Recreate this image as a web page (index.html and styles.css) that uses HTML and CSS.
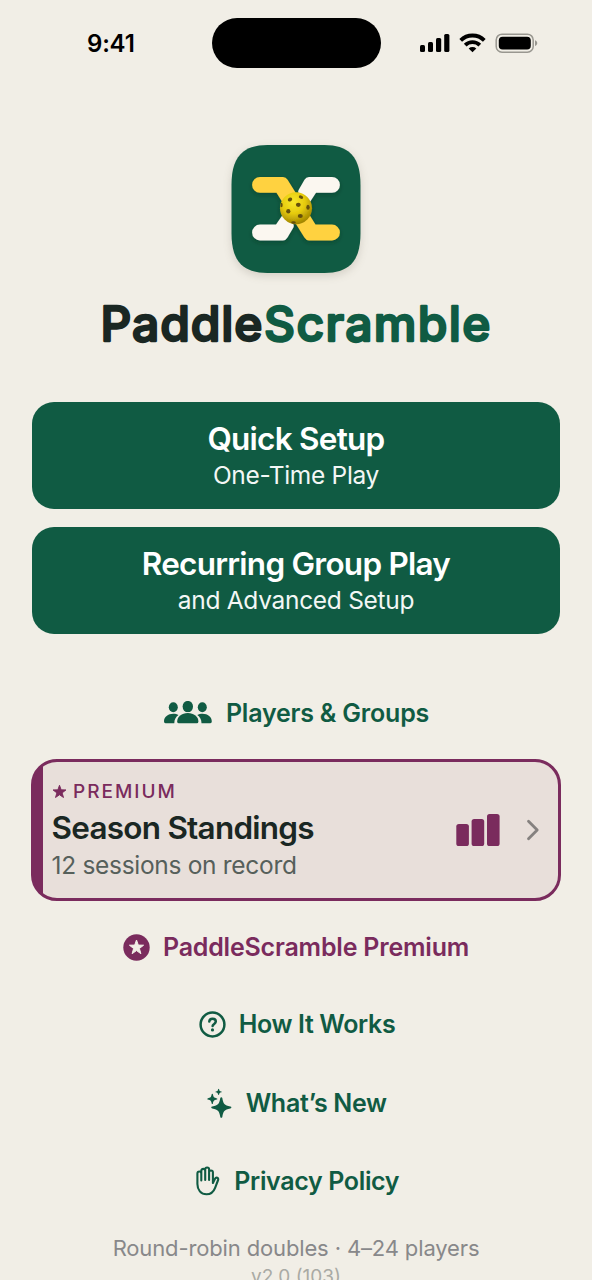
FILE: index.html
```html
<!DOCTYPE html>
<html lang="en">
<head>
<meta charset="utf-8">
<title>PaddleScramble</title>
<link rel="stylesheet" href="styles.css">
</head>
<body>
<div class="screen">
  <header class="status">
    <span class="time">9:41</span>
    <span class="island"></span>
    <svg class="indicators" width="118" height="20" viewBox="0 0 118 20">
      <rect x="0" y="12" width="5" height="7" rx="1.500"/>
      <rect x="8" y="9" width="5" height="10" rx="1.500"/>
      <rect x="16" y="5" width="5.200" height="14" rx="1.500"/>
      <rect x="24.200" y="1" width="5.200" height="18" rx="1.500"/>
      <g fill="none" stroke="#000" stroke-width="3.800">
        <path d="M40.700 7.400a16.600 16.600 0 0 1 23.600 0"/>
        <path d="M45.200 12.100a10.400 10.400 0 0 1 14.600 0"/>
      </g>
      <path d="M48.700 15.500a5.600 5.600 0 0 1 7.600 0L52.500 19.300Z"/>
      <rect x="76.200" y="1.200" width="37" height="18" rx="5.800" fill="none" stroke="#999790" stroke-width="1.500"/>
      <rect x="78.800" y="3.800" width="32" height="12.800" rx="3.800"/>
      <path d="M115 7.200c3 1 3 4.800 0 5.800Z" fill="#999790"/>
    </svg>
  </header>

  <svg class="app-icon" width="130" height="128" viewBox="-1 0 130 128">
    <defs>
      <radialGradient id="ball" cx=".42" cy=".3" r=".72">
        <stop offset="0" stop-color="#f8e72a"/><stop offset=".5" stop-color="#e6cb0e"/><stop offset="1" stop-color="#9d8100"/>
      </radialGradient>
      <filter id="soft" x="-20%" y="-20%" width="140%" height="150%"><feDropShadow dx="0" dy="2" stdDeviation="2" flood-color="#05281a" flood-opacity=".35"/></filter>
      <clipPath id="round"><circle cx="64" cy="63.300" r="16"/></clipPath>
    </defs>
    <path fill="#105b43" d="M40 0H88C101 0 109 1 116.500 6.500C125 13 128.500 24 128.500 40V88C128.500 104 125 115 116.500 121.500C109 127 101 128 88 128H40C27 128 19 127 11.500 121.500C3 115-.5 104-.5 88V40C-.5 24 3 13 11.500 6.500C19 1 27 0 40 0Z"/>
    <g filter="url(#soft)">
      <path fill="#fbf7f0" d="M77 32H100a7.900 7.900 0 0 1 0 15.800H84L76 60H72L66.500 48Q65.800 46.500 66.600 45L72.500 34.800Q74 32 77 32Z"/>
      <path fill="#fbf7f0" d="M51 95.400H28a7.900 7.900 0 0 1 0-15.800H44L52 68H56L61.500 79.500Q62.200 81 61.400 82.500L55.500 92.600Q54 95.400 51 95.400Z"/>
      <path fill="#ffd23f" d="M28 32H51Q54 32 55.600 34.800L83.500 79.600H100a7.900 7.900 0 0 1 0 15.800H77Q74 95.400 72.400 92.600L44.500 47.800H28a7.900 7.900 0 0 1 0-15.800Z"/>
      <circle cx="64" cy="63.300" r="16" fill="url(#ball)"/>
    </g>
    <g clip-path="url(#round)" fill="#65500c">
      <ellipse cx="58" cy="54.500" rx="2.300" ry="1.800" transform="rotate(-25 58 54.500)"/>
      <ellipse cx="69" cy="52.100" rx="2.300" ry="1.600" transform="rotate(25 69 52.100)"/>
      <ellipse cx="66.300" cy="59.800" rx="2.400" ry="2.100"/>
      <ellipse cx="76" cy="62.300" rx="1.700" ry="2.500"/>
      <ellipse cx="56.300" cy="66.300" rx="2.100" ry="2.200"/>
      <ellipse cx="68.300" cy="71" rx="2.500" ry="2"/>
      <ellipse cx="49.500" cy="60" rx="1.200" ry="2.300"/>
      <ellipse cx="61.500" cy="77.500" rx="2.300" ry="1.300"/>
    </g>
  </svg>

  <svg class="wordmark" width="400" height="60" viewBox="0 0 400 60" role="heading">
    <text class="word-dark" x="4.500" y="46.500" textLength="162" lengthAdjust="spacing">Paddle</text>
    <text class="word-green" x="168" y="46.500" textLength="226.500" lengthAdjust="spacing">Scramble</text>
  </svg>

  <main class="content">
    <button class="action">
      <span class="action-title">Quick Setup</span>
      <span class="action-sub">One-Time Play</span>
    </button>
    <button class="action">
      <span class="action-title">Recurring Group Play</span>
      <span class="action-sub">and Advanced Setup</span>
    </button>

    <a class="link players">
      <svg width="48" height="24" viewBox="0 0 48 24" fill="currentColor">
        <ellipse cx="9.300" cy="6.300" rx="4.500" ry="5"/><ellipse cx="38.300" cy="6.300" rx="4.500" ry="5"/>
        <path d="M0 20.500C0 16 4 12.800 9.300 12.800c2 0 3.700.4 5.200 1.300-2.600 1.800-4.200 4.500-4.200 8.100H1.500Q0 22.200 0 20.500Z"/>
        <path d="M47.800 20.500c0-4.500-4-7.700-9.300-7.700-2 0-3.700.4-5.200 1.300 2.600 1.800 4.200 4.500 4.200 8.100h8.800q1.500 0 1.500-1.700Z"/>
        <g stroke="#f1eee6" stroke-width="1.600" paint-order="stroke"><ellipse cx="23.800" cy="5.600" rx="5.200" ry="5.700"/>
        <path d="M13.200 20.400c0-4.800 4.500-8.400 10.600-8.400s10.600 3.600 10.600 8.400q0 1.900-1.700 1.900H14.900q-1.700 0-1.700-1.900Z"/></g>
      </svg>
      <span>Players &amp; Groups</span>
    </a>

    <section class="card">
      <div class="card-text">
        <div class="eyebrow">
          <svg width="15" height="15" viewBox="0 0 24 24" fill="currentColor"><path stroke="currentColor" stroke-width="1.500" stroke-linejoin="round" d="M12 2l2.600 7.300 7.700.2-6.100 4.700 2.200 7.400L12 17.200l-6.400 4.400 2.200-7.400L1.700 9.500l7.700-.2Z"/></svg>
          <span>PREMIUM</span>
        </div>
        <div class="card-title">Season Standings</div>
        <div class="card-sub">12 sessions on record</div>
      </div>
      <svg class="bars" width="44" height="34" viewBox="0 0 44 34" fill="currentColor">
        <rect x=".3" y="11" width="12.600" height="22" rx="2.600"/><rect x="15.600" y="6" width="12.600" height="27" rx="2.600"/><rect x="31" y="1" width="12.600" height="32" rx="2.600"/>
      </svg>
      <svg class="chevron" width="14" height="22" viewBox="0 0 14 22"><path d="M2.500 2.200 11.200 11l-8.700 8.800"/></svg>
    </section>

    <a class="link premium">
      <svg width="27" height="27" viewBox="0 0 27 27"><circle cx="13.500" cy="13.500" r="13.200" fill="currentColor"/><path fill="#f1eee6" stroke="#f1eee6" stroke-linejoin="round" d="M13.500 6l1.800 5.100 5.300.1-4.200 3.300 1.500 5.200-4.400-3.100-4.400 3.100 1.500-5.200-4.200-3.300 5.300-.1Z"/></svg>
      <span>PaddleScramble Premium</span>
    </a>
    <a class="link how">
      <svg width="27" height="27" viewBox="0 0 27 27" fill="none" stroke="currentColor" stroke-linecap="round" stroke-linejoin="round"><circle cx="13.500" cy="13.500" r="11.900" stroke-width="2.500"/><path stroke-width="2.500" d="M10.300 10.500c.2-3.700 6.500-3.600 6.500.1 0 2.300-3.200 2.300-3.200 4.500"/><circle cx="13.500" cy="18.900" r="1.600" fill="currentColor" stroke="none"/></svg>
      <span>How It Works</span>
    </a>
    <a class="link new">
      <svg width="25" height="30" viewBox="0 0 25 30" fill="currentColor">
        <path d="M14.300 9.200q.8 0 1 .9c1 5.700 2 7.300 8 8.500q1.100.2 1.100.9t-1.100.9c-6 1.200-7 2.800-8 8.500q-.2.900-1 .9t-1-.9c-1-5.700-2-7.300-8-8.500q-1.100-.2-1.100-.9t1.100-.9c6-1.200 7-2.800 8-8.500q.2-.9 1-.9Z"/>
        <path d="M5.300 5.800q.5 0 .6.500c.6 2.900 1 3.400 4 4.100q.5.100.5.500t-.5.500c-3 .7-3.400 1.200-4 4.100q-.1.500-.6.500t-.6-.5c-.6-2.900-1-3.400-4-4.100q-.5-.1-.5-.5t.5-.5c3-.7 3.400-1.200 4-4.100q.1-.5.600-.5Z"/>
        <path d="M11.600.8q.4 0 .5.400c.3 1.600.7 2 2.200 2.300q.5.100.5.400t-.5.400c-1.500.3-1.900.7-2.200 2.300q-.1.400-.5.400t-.5-.4c-.3-1.600-.7-2-2.200-2.300q-.5-.1-.5-.4t.5-.4c1.500-.3 1.900-.7 2.200-2.300q.1-.4.500-.4Z"/>
      </svg>
      <span>What’s New</span>
    </a>
    <a class="link privacy">
      <svg width="24" height="30" viewBox="0 0 24 30" fill="none" stroke="currentColor" stroke-width="2.100" stroke-linecap="round" stroke-linejoin="round"><path d="M5.300 14.500V7.500c0-2.700-3.900-2.700-3.900 0V18c0 6 3.500 10.300 9.100 10.300 4.500 0 7-2.300 8.600-6.500l3-7.800c.9-2.200-2-3.200-3.100-1.200L16.900 17V6.300c0-2.500-3.800-2.500-3.800 0V14M5.300 14V4.800c0-2.600 3.900-2.600 3.900 0V14M9.200 13.500V3.300c0-2.500 3.900-2.500 3.900 0V14"/></svg>
      <span>Privacy Policy</span>
    </a>
  </main>

  <footer class="footer">
    <div class="tagline">Round-robin doubles · 4–24 players</div>
    <div class="version">v2.0 (103)</div>
  </footer>
</div>
</body>
</html>
```

FILE: styles.css
```css
* { box-sizing: border-box; }
body { margin: 0; background: #f1eee6; font-family: Inter, "Liberation Sans", sans-serif; }
.screen { width: 592px; height: 1280px; overflow: hidden; display: flex; flex-direction: column; align-items: center; }
.screen svg { flex: none; display: block; }

.status { width: 592px; height: 86px; flex: none; display: grid; grid-template-columns: 211.500px 169px 1fr; align-items: center; }
.time { padding-left: 87px; font-size: 24px; font-weight: 600; line-height: 30px; letter-spacing: -.2px; color: #000; margin-top: 2px; }
.island { height: 49.500px; background: #000; border-radius: 25px; }
.indicators { margin-left: 39.500px; }

.app-icon { margin-top: 59px; filter: drop-shadow(0 3px 4px rgba(60, 50, 30, .16)); }
.wordmark { margin-top: 21px; font-size: 48px; font-weight: 500; }
.wordmark text { stroke-width: 2.300px; stroke-linejoin: round; }
.word-dark { fill: #1a2723; stroke: #1a2723; }
.word-green { fill: #105b43; stroke: #105b43; }

.content { width: 528px; margin-top: 47.500px; flex: none; display: flex; flex-direction: column; align-items: center; }
.action { width: 528px; height: 107px; margin: 0 0 18.500px; padding: 17px 0 0; border: 0; border-radius: 22px; background: #105b43; color: #fff; font-family: inherit; display: flex; flex-direction: column; align-items: center; }
.action-title { font-size: 31.500px; font-weight: 600; line-height: 39px; letter-spacing: -.75px; }
.action-sub { font-size: 24.500px; line-height: 35px; letter-spacing: -.3px; color: #f3f7f5; }

.link { display: flex; align-items: center; height: 40px; color: #105b43; font-size: 25px; font-weight: 600; letter-spacing: -.2px; white-space: nowrap; }
.players { margin-top: 40.500px; gap: 14px; padding-left: 1px; }
.premium { margin-top: 26.500px; gap: 13px; color: #7a2b5d; }
.how { margin-top: 37px; gap: 13px; letter-spacing: -.35px; padding-left: 2px; }
.new { margin-top: 39px; gap: 14px; letter-spacing: -.3px; padding-left: 1.500px; }
.privacy { margin-top: 38px; gap: 14px; letter-spacing: -.35px; padding-left: 3.500px; }

.card { width: 530px; height: 142px; margin-top: 25.500px; flex: none; border: 3px solid #7a2b5d; border-radius: 26px; background: linear-gradient(90deg, #7a2b5d 12px, #e8dfda 12px) border-box; display: flex; align-items: center; padding: 0 18px 0 17.500px; color: #7a2b5d; }
.card-text { flex: 1; }
.eyebrow { display: flex; align-items: center; gap: 6.500px; height: 28px; font-size: 19px; font-weight: 500; letter-spacing: 2px; }
.card-title { font-size: 31.500px; line-height: 43px; font-weight: 600; letter-spacing: -.76px; color: #1a2723; }
.card-sub { font-size: 24.500px; line-height: 33px; letter-spacing: -.3px; color: #56605b; }
.bars { margin-right: 26px; }
.chevron path { fill: none; stroke: #85817f; stroke-width: 2.800; stroke-linecap: round; stroke-linejoin: round; }

.footer { margin-top: 31px; text-align: center; white-space: nowrap; }
.tagline { font-size: 22px; line-height: 32px; letter-spacing: -.14px; color: #88888a; }
.version { font-size: 19px; line-height: 25px; color: #a9aaa4; }
```
